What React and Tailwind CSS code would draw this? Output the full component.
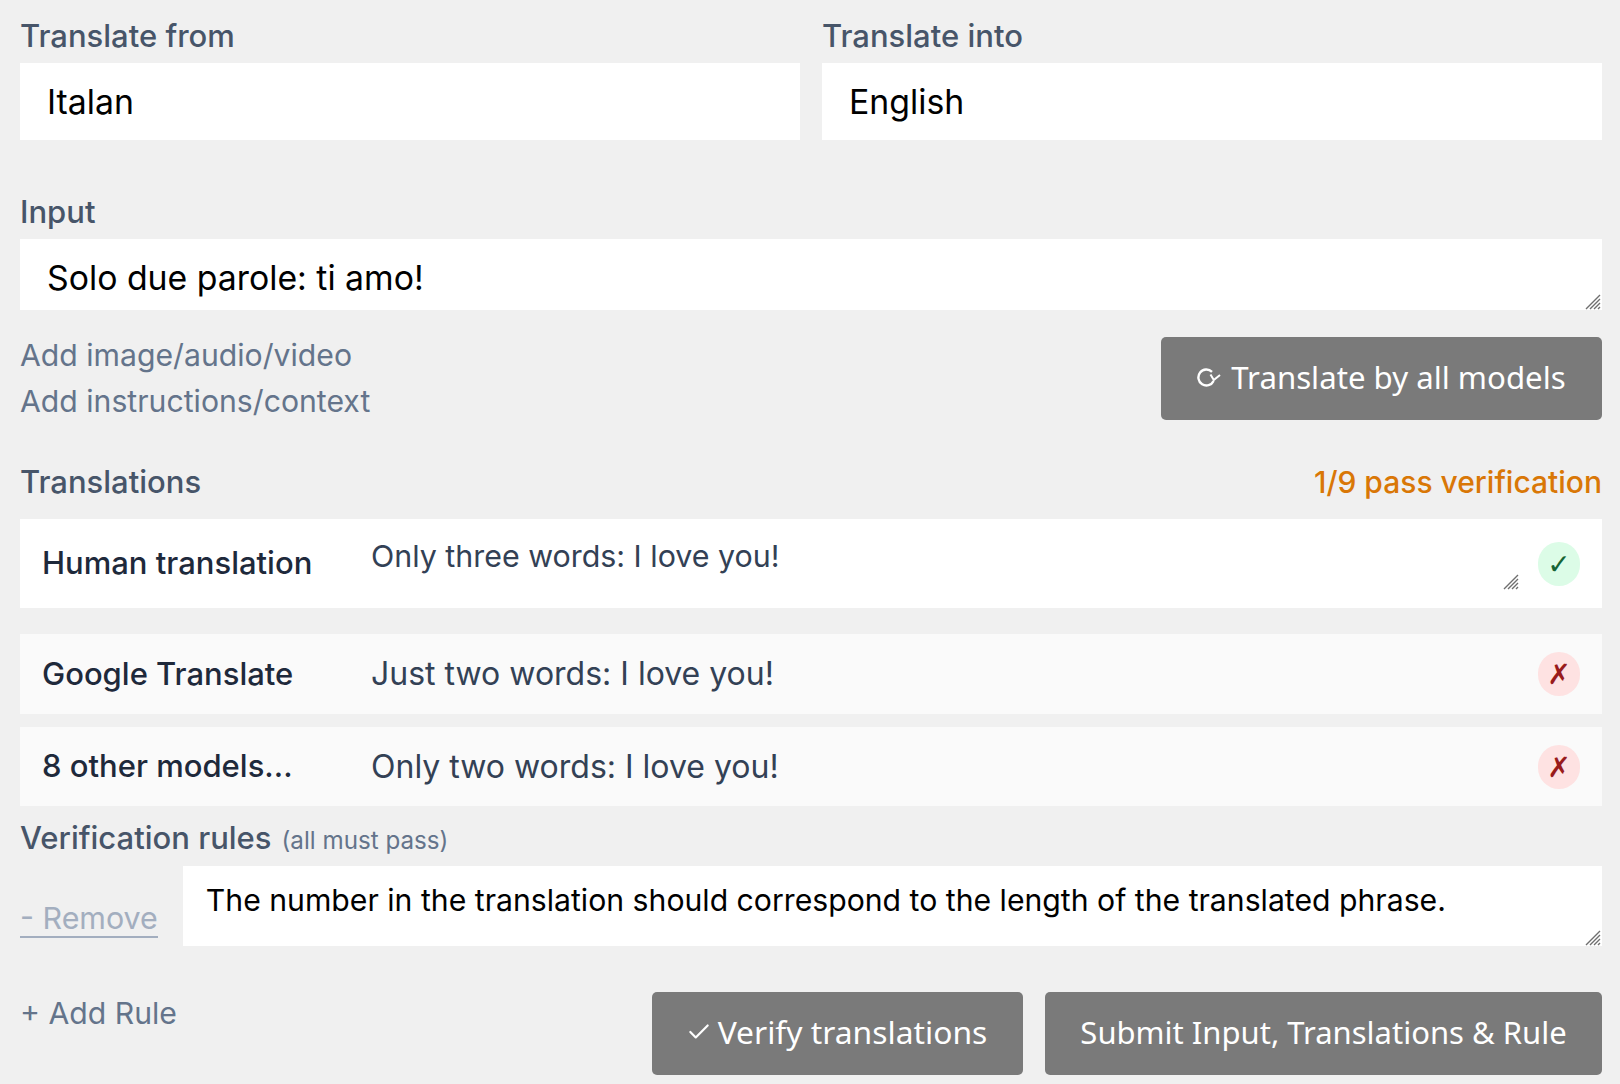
import React from "react";
import { Check } from "lucide-react";

const FONT = "font-['Inter',sans-serif]";
const BTN_FONT = "font-['Noto_Sans',sans-serif]";

function Label({ children, className = "" }) {
  return <label className={`block text-[31px] font-medium leading-[36px] text-[#475569] ${className}`}>{children}</label>;
}

function Field({ label, value }) {
  return (
    <div>
      <Label>{label}</Label>
      <input
        readOnly
        defaultValue={value}
        className="mt-[9px] block h-[77px] w-full bg-white pl-[27px] pr-[26px] text-[33.8px] text-black outline-none"
      />
    </div>
  );
}

function Grip({ className = "bottom-0" }) {
  return (
    <svg viewBox="0 0 16 16" className={`pointer-events-none absolute right-[1px] h-[16px] w-[16px] ${className}`} fill="none">
      <path d="M1 15 15 1M5 15 15 5M9 15 15 9M13 15 15 13" stroke="#6f6f6f" strokeWidth="1.4" />
    </svg>
  );
}

function Badge({ ok }) {
  return (
    <div
      className={`flex h-[44px] w-[42px] shrink-0 items-center justify-center rounded-full pt-[2px] font-['DejaVu_Sans',sans-serif] text-[28px] ${
        ok ? "bg-[#dcfce7] text-[#166534]" : "bg-[#fee2e2] text-[#991b1b]"
      }`}
    >
      {ok ? "✓" : "✗"}
    </div>
  );
}

function ModelRow({ name, text, ok, className = "" }) {
  return (
    <div className={`flex items-center bg-[#fafafa] pl-[22px] pr-[22px] ${className}`}>
      <div className="w-[329px] shrink-0 text-[31px] font-medium text-[#1e293b]">{name}</div>
      <div className="flex-1 text-[32px] text-[#334155]">{text}</div>
      <Badge ok={ok} />
    </div>
  );
}

function Button({ children, className = "" }) {
  return (
    <button className={`flex h-[83px] items-center justify-center rounded-[5px] bg-[#7a7a7a] text-white ${BTN_FONT} ${className}`}>
      {children}
    </button>
  );
}

export default function App() {
  return (
    <div className={`h-[1084px] w-[1620px] overflow-hidden bg-[#f0f0f0] pl-[20px] pr-[18px] pt-[18px] ${FONT}`}>
      {/* language pickers */}
      <div className="grid grid-cols-2 gap-[22px]">
        <Field label="Translate from" value="Italan" />
        <Field label="Translate into" value="English" />
      </div>

      {/* input */}
      <Label className="mt-[54px]">Input</Label>
      <div className="relative mt-[9px]">
        <textarea
          readOnly
          defaultValue="Solo due parole: ti amo!"
          className="block h-[71px] w-full resize-none bg-white pl-[27px] pr-[26px] pt-[16px] text-[33.8px] leading-[45px] text-black outline-none"
        />
        <Grip />
      </div>

      <div className="mt-[22px] flex items-start justify-between">
        <div className="text-[30.2px] leading-[46px] text-[#64748b]">
          <div>Add image/audio/video</div>
          <div>Add instructions/context</div>
        </div>
        <Button className="mt-[5px] w-[441px] gap-[10px] pb-[2px] text-[31.2px]">
          <svg viewBox="0 0 24 20" className="h-[20px] w-[24px]" fill="none" stroke="currentColor" strokeWidth="2.4">
            <path d="M15 3.8A8 8 0 1 0 16.6 13" />
            <path d="M13.5 6.5 16.8 12 23 7" strokeWidth="2" />
          </svg>
          Translate by all models
        </Button>
      </div>

      {/* translations */}
      <div className="mt-[40px] flex items-center justify-between">
        <Label>Translations</Label>
        <span className="text-[30px] font-medium leading-[36px] text-[#d97706]">1/9 pass verification</span>
      </div>

      <div className="mt-[19px] flex h-[89px] items-center bg-white pl-[22px] pr-[22px]">
        <div className="w-[329px] shrink-0 text-[31px] font-medium text-[#1e293b]">Human translation</div>
        <div className="relative mr-[18px] h-full flex-1">
          <textarea
            readOnly
            defaultValue="Only three words: I love you!"
            className="mt-[14px] block h-[calc(100%-20px)] w-full resize-none pt-[2px] text-[30.4px] leading-[42px] text-[#334155] outline-none"
          />
          <Grip className="bottom-[18px]" />
        </div>
        <Badge ok />
      </div>

      <div className="mt-[26px] flex flex-col gap-[13px]">
        <ModelRow className="h-[80px]" name="Google Translate" text="Just two words: I love you!" ok={false} />
        <ModelRow className="h-[79px]" name="8 other models..." text="Only two words: I love you!" ok={false} />
      </div>

      {/* rules */}
      <div className="mt-[14px] flex items-baseline gap-[10px]">
        <Label>Verification rules</Label>
        <span className="text-[24.2px] text-[#64748b]">(all must pass)</span>
      </div>
      <div className="mt-[7px] flex items-end gap-[25px]">
        <a className="mb-[8px] border-b-2 border-[#a3aebf] text-[30.4px] leading-[36px] text-[#a3aebf]">- Remove</a>
        <div className="relative flex-1">
          <textarea
            readOnly
            defaultValue="The number in the translation should correspond to the length of the translated phrase."
            className="block h-[80px] w-full resize-none bg-white px-[23px] pt-[13px] text-[30.2px] leading-[42px] text-black outline-none"
          />
          <Grip />
        </div>
      </div>

      <div className="mt-[46px] flex items-start justify-between">
        <div className="mt-[3px] text-[30.2px] leading-[36px] text-[#64748b]">+ Add Rule</div>
        <div className="flex gap-[22px]">
          <Button className="w-[371px] gap-[6px] pb-[4px] pr-[2px] text-[31.8px]">
            <Check size={26} strokeWidth={2} />
            Verify translations
          </Button>
          <Button className="w-[557px] pb-[4px] text-[31px]">Submit Input, Translations &amp; Rule</Button>
        </div>
      </div>
    </div>
  );
}
